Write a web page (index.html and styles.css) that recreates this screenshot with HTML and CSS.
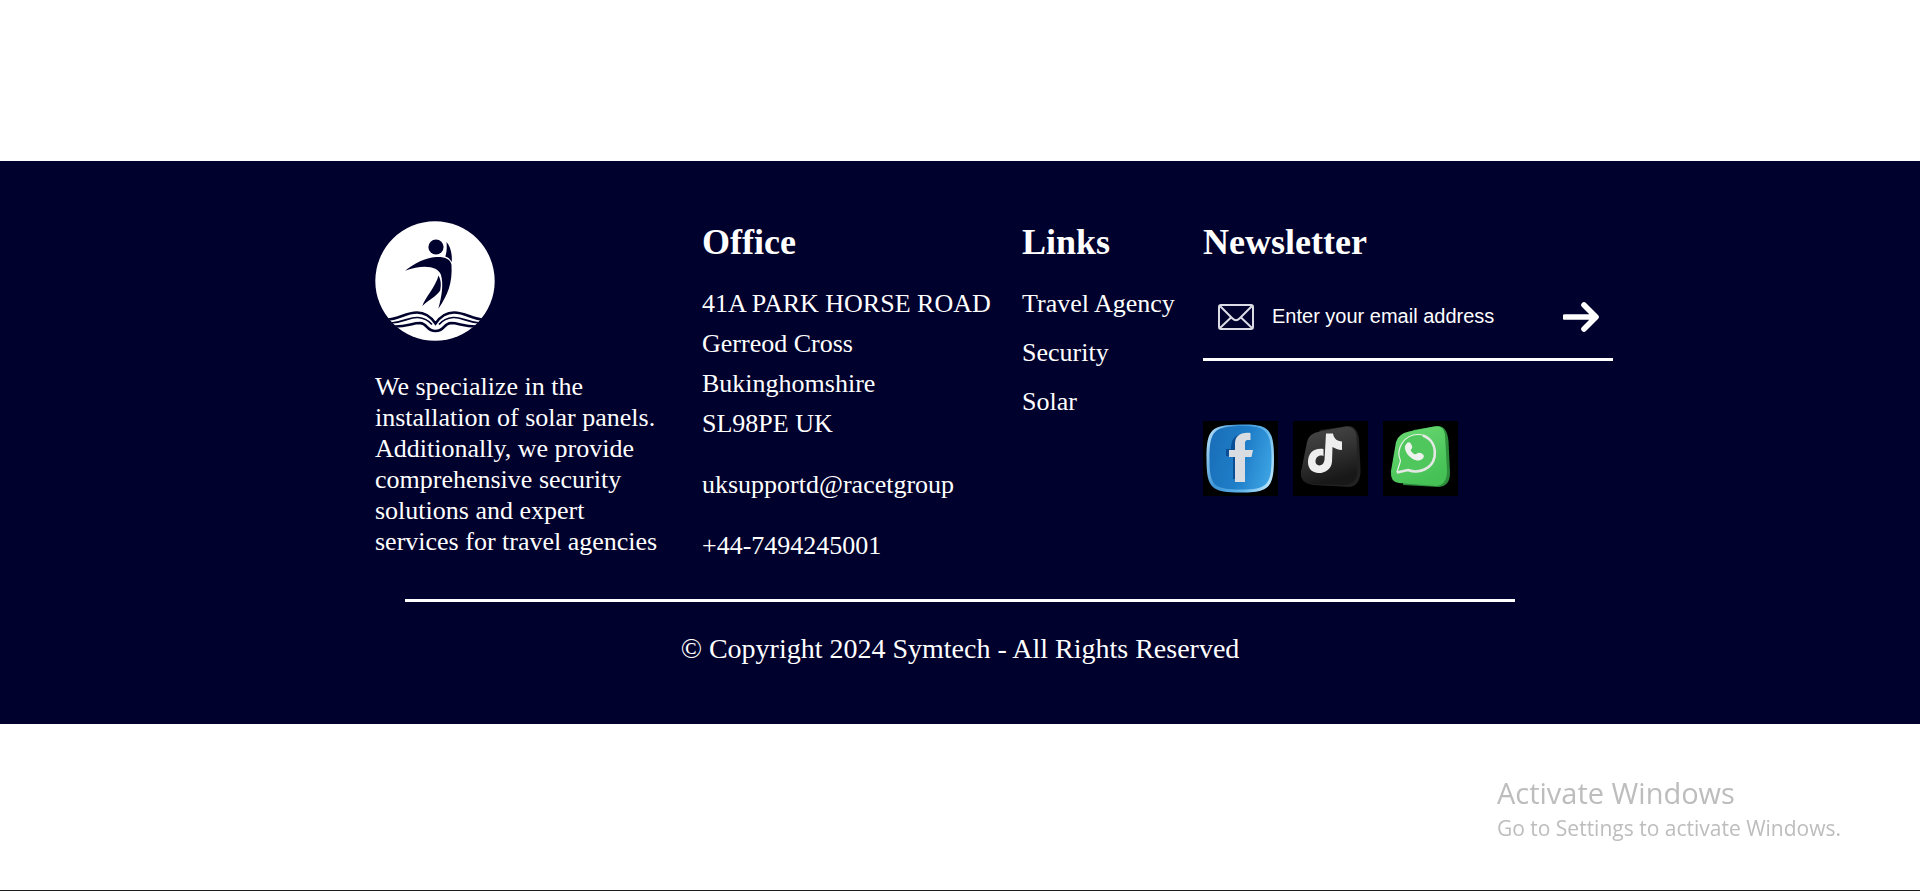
FILE: index.html
```html
<!DOCTYPE html>
<html lang="en">
<head>
<meta charset="utf-8">
<title>Symtech</title>
<link rel="stylesheet" href="styles.css">
</head>
<body>
<footer class="footer">
  <div class="columns">
    <section class="about">
      <svg class="logo" viewBox="0 0 120 120" role="img" aria-label="Symtech logo">
        <defs><clipPath id="disc"><circle cx="60" cy="60" r="60"/></clipPath></defs>
        <circle cx="60" cy="60" r="59.7" fill="#fff"/>
        <g fill="#01012d">
          <circle cx="61" cy="26" r="7.6"/>
          <path d="M71.500 21C75 25 77.500 32 76.700 41C75 38 73 36 70.300 35.500C71.800 31 72 26 71.500 21Z"/>
          <path d="M30 49.800C40 42 50 37 61 36C69 35.500 76 38 76.500 44C77.500 62 73 74 63.300 87.700C67 75 68.500 63 66 54C63 45 48 43 30 49.800Z"/>
          <path d="M63.500 54.500C66.500 60 66 65 65.200 69.500C61 76 53 79 47.300 85C50 77 61 65 63.500 54.500Z"/>
        </g>
        <g clip-path="url(#disc)" fill="none" stroke="#01012d">
          <path stroke-width="2.600" d="M12 98.500C24 98.500 30 91.500 42 91.500C51 91.500 56 96 60.500 102.500C65 96 70 91.500 79 91.500C91 91.500 97 98.500 109 98.500"/>
          <path stroke-width="1.700" d="M16 102C30 101 34 96 43 96.500C49 97 54 100 57 103.500M105 102C91 101 87 96 78 96.500C72 97 67 100 64 103.500"/>
          <path stroke-width="2.600" d="M20 105.500C33 105.500 37 102 45 102C53 102.500 51 110 60.500 110C70 110 68 102.500 76 102C84 102 88 105.500 101 105.500"/>
        </g>
      </svg>
      <p class="about-text">We specialize in the installation of solar panels. Additionally, we provide comprehensive security solutions and expert services for travel agencies</p>
    </section>
    <section>
      <h2 class="heading">Office</h2>
      <address class="office">
        <p>41A PARK HORSE ROAD<br>Gerreod Cross<br>Bukinghomshire<br>SL98PE UK</p>
        <p>uksupportd@racetgroup</p>
        <p>+44-7494245001</p>
      </address>
    </section>
    <nav>
      <h2 class="heading">Links</h2>
      <ul class="links">
        <li><a href="#">Travel Agency</a></li>
        <li><a href="#">Security</a></li>
        <li><a href="#">Solar</a></li>
      </ul>
    </nav>
    <section>
      <h2 class="heading">Newsletter</h2>
      <form class="newsletter">
        <svg class="envelope" viewBox="0 0 36 30" aria-hidden="true">
          <g fill="none" stroke="#dcdce6" stroke-width="2" stroke-linejoin="round" stroke-linecap="round">
            <rect x="1" y="3" width="34" height="24" rx="2"/>
            <path d="M2 4L14.500 16.500Q18 20 21.500 16.500L34 4M2 26L13 15.500M34 26L23 15.500"/>
          </g>
        </svg>
        <input class="email" type="email" placeholder="Enter your email address" aria-label="Enter your email address">
        <button class="submit" type="submit" aria-label="Subscribe">
          <svg class="arrow" viewBox="0 0 36 32" aria-hidden="true">
            <path d="M2 16H32M21 4L33 16L21 28" fill="none" stroke="#fff" stroke-width="5.600" stroke-linecap="round" stroke-linejoin="round"/>
          </svg>
        </button>
      </form>
      <div class="social">
        <a href="#" aria-label="Facebook">
          <svg class="tile" viewBox="0 0 75 75" aria-hidden="true">
            <defs>
              <linearGradient id="fb" x1="0" x2="1" y1="0.300" y2="0.600"><stop offset="0" stop-color="#1a6fb9"/><stop offset="0.550" stop-color="#1f7ec8"/><stop offset="1" stop-color="#3ba1e2"/></linearGradient>
              <linearGradient id="fbe" x1="0" x2="1" y1="0.300" y2="0.700"><stop offset="0" stop-color="#a5d4f3"/><stop offset="0.300" stop-color="#3d94d4"/><stop offset="0.700" stop-color="#62b6ea"/><stop offset="1" stop-color="#b6e2fa"/></linearGradient>
            </defs>
            <rect width="75" height="75"/>
            <path d="M37 3.500C65 3 71 7 71 37C71 67 66 71.500 38 71.500C9 71.500 3.500 68 3.500 38C3.500 8 8 4 37 3.500Z" fill="url(#fbe)"/>
            <path d="M37 5C62 4.500 68.500 9 68.500 37C68.500 64 64 68.500 38 68.500C11 68.500 6.500 65 6.500 38C6.500 10 11 5.500 37 5Z" fill="url(#fb)"/>
            <path d="M23 35V28H28C28 18 32 13 42 13V20C38 20 38 23 38 29V58H30V36Z" fill="#0a4f95"/>
            <path d="M26 36V29H32V23C32 15 37 11 47.500 12V19C42 18.500 42 20 42 24V29H50L48.500 36H42V61H32V36Z" fill="#d9dce0"/>
          </svg>
        </a>
        <a href="#" aria-label="TikTok">
          <svg class="tile" viewBox="0 0 75 75" aria-hidden="true">
            <defs><linearGradient id="tk" x1="0" x2="0.300" y1="0" y2="1"><stop offset="0" stop-color="#4a4a4a"/><stop offset="0.500" stop-color="#343434"/><stop offset="1" stop-color="#181818"/></linearGradient></defs>
            <rect width="75" height="75"/>
            <path d="M27 9L55 5Q64 5 66 18L67.500 48Q68 64 57 66L20 64Q8 62 8 50Z" fill="#222"/>
            <path d="M27 10.500L53 5.500Q62 5 63.500 15L64.500 46Q65 62 54 64L18 63Q7 62 8 51L14 21Q16 12 27 10.500Z" fill="url(#tk)"/>
            <path d="M33 12.500H40C41 18 44 20 49 20.500V29C45 29 42 27.500 39.500 26L39 41C38 49 31 52.500 25 52C18 51 15 47 15 41C15 32 21 26.500 30.500 28V35C26 33.500 23 36 22.500 40C22 45 30 47 31.500 39Z" fill="#eee"/>
          </svg>
        </a>
        <a href="#" aria-label="WhatsApp">
          <svg class="tile" viewBox="0 0 75 75" aria-hidden="true">
            <defs><linearGradient id="wa" x1="0" x2="0.500" y1="0" y2="1"><stop offset="0" stop-color="#6cda74"/><stop offset="1" stop-color="#45c155"/></linearGradient></defs>
            <rect width="75" height="75"/>
            <path d="M30 9L55 5Q64 5 65.500 20L67 52Q67 65 56 66L20 64Z" fill="#2e8c3d"/>
            <path d="M26 10.500L51 5.500Q61 4 62 14L64 50Q64 64 53 65L16 62Q7 61 8 50L13 21Q15 13 26 10.500Z" fill="url(#wa)"/>
            <path d="M14 51L17.500 40C12 27 22 13.500 35 13.500C45 13.500 52.500 22 52 34C51 47 37 54 25 49Z" fill="#4fc75d" stroke="#e9f1e9" stroke-width="1.200" stroke-linejoin="round"/>
            <path d="M40 14.500C49 18 53 26 51.500 36C49 48 36 53 25 49L14 51.500" fill="none" stroke="#e4e8e4" stroke-width="2.600"/>
            <path d="M24 22C26 20 28 22 29 25C30 28 27 28 28 30C30 33 32 34 34 32.500C35 31 39 32 40.500 34C42 37 38 40 34 39.500C27 38 21 31 22 25Z" fill="#eef2ee"/>
          </svg>
        </a>
      </div>
    </section>
  </div>
  <hr class="rule">
  <p class="copyright">© Copyright 2024 Symtech - All Rights Reserved</p>
</footer>
<aside class="watermark">
  <p class="watermark-title">Activate Windows</p>
  <p class="watermark-text">Go to Settings to activate Windows.</p>
</aside>
</body>
</html>
```
FILE: styles.css
```css
* {
  box-sizing: border-box;
}

body {
  margin: 0;
  min-height: 100vh;
  padding-top: 161px;
  background: #fff;
  border-bottom: 1px solid #1c1c1c;
  font-family: "Liberation Serif", "Times New Roman", serif;
  font-size: 26px;
}

p,
h2,
ul {
  margin: 0;
  padding: 0;
}

a {
  color: inherit;
  text-decoration: none;
}

.footer {
  padding: 60px 20px 58px;
  background: #01012d;
  color: #fff;
}

.columns {
  display: grid;
  grid-template-columns: 300px 293px 154px 410px;
  column-gap: 27px;
  max-width: 1306px;
  margin: 0 auto;
  padding-left: 68px;
}

.about {
  padding-right: 10px;
}

.logo {
  display: block;
  width: 120px;
  height: 120px;
}

.about-text {
  margin-top: 30px;
  line-height: 31px;
}

.heading {
  margin-bottom: 20px;
  font-size: 36px;
  line-height: 43px;
}

.office {
  display: grid;
  gap: 21px;
  font-style: normal;
  line-height: 40px;
  white-space: nowrap;
}

.links {
  display: grid;
  gap: 9px;
  list-style: none;
  line-height: 40px;
  white-space: nowrap;
}

.newsletter {
  display: flex;
  align-items: center;
  gap: 16px;
  padding: 13px 14px 21px 15px;
  border-bottom: 3px solid #fff;
}

.envelope {
  width: 36px;
  height: 30px;
}

.email {
  flex: 1;
  min-width: 0;
  height: 40px;
  padding: 0 2px 2px;
  border: 0;
  outline: 0;
  background: transparent;
  color: #fff;
  font-family: "Liberation Sans", Arial, sans-serif;
  font-size: 20px;
}

.email::placeholder {
  color: #fff;
  opacity: 1;
}

.submit {
  padding: 0;
  border: 0;
  background: transparent;
}

.arrow {
  display: block;
  width: 36px;
  height: 32px;
}

.social {
  display: flex;
  gap: 15px;
  margin-top: 60px;
}

.tile {
  display: block;
  width: 75px;
  height: 75px;
}

.rule {
  max-width: 1110px;
  height: 3px;
  margin: 33px auto 30px;
  border: 0;
  background: #fff;
}

.copyright {
  font-size: 28px;
  line-height: 34px;
  text-align: center;
}

.watermark {
  position: fixed;
  right: 79px;
  bottom: 48px;
  color: #bdbdbd;
  font-family: "Segoe UI", "Open Sans", sans-serif;
}

.watermark-title {
  font-size: 29px;
  line-height: 40px;
}

.watermark-text {
  font-size: 21px;
  line-height: 30px;
}
```
